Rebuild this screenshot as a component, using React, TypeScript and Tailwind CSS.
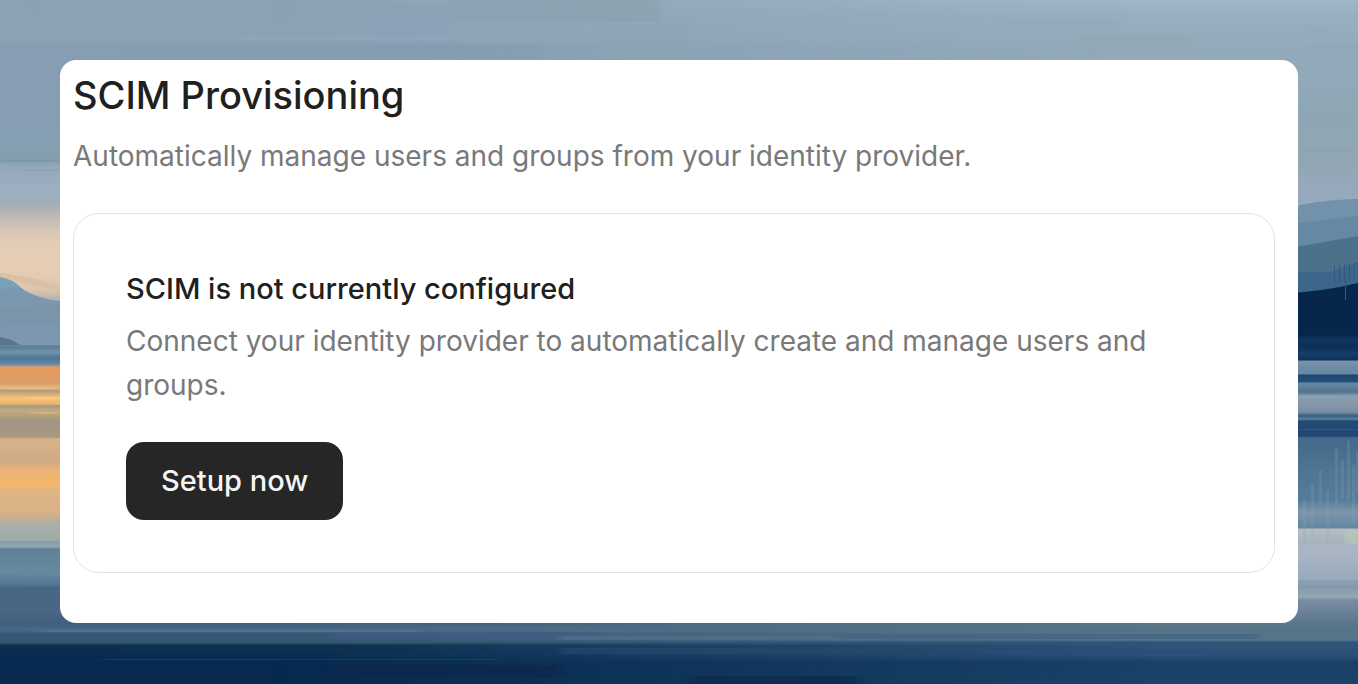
type Band = [y: number, color: string]

// Gradient stops down each side of the scene; a repeated y is a hard edge.
const LEFT: Band[] = [
  [0, '#8ba2b5'], [38, '#8ca3b4'], [46, '#879db2'], [120, '#869db5'], [148, '#87a1b0'], [158, '#819cab'],
  [168, '#96a9bb'], [190, '#9dafc0'], [204, '#a1adb7'], [216, '#beb9b5'], [232, '#d9c8b6'], [245, '#e4cdb5'],
  [270, '#e5ceb4'], [290, '#dcc5b0'], [300, '#b5b0ae'], [304, '#7c9ab3'], [322, '#7c96ae'], [340, '#7089a1'],
  [348, '#5d7f99'], [352, '#7194ae'], [358, '#54778f'], [364, '#5989b0'], [367, '#e09a62'], [372, '#e79c60'],
  [384, '#d79d68'], [387, '#e5ba7d'], [391, '#b29d7e'], [398, '#f6c277'], [404, '#edb36b'], [406, '#9e9a83'],
  [410, '#c5a982'], [416, '#b5a079'], [420, '#a19785'], [437, '#aa9780'], [439, '#d7b28a'], [462, '#cfab83'],
  [470, '#edb377'], [486, '#f4b668'], [490, '#dfb583'], [510, '#dbb287'], [518, '#c8ad8e'], [524, '#a9afa9'],
  [540, '#9eaaa5'], [542, '#859dad'], [547, '#91a5ad'], [549, '#5f7f97'], [572, '#67899f'], [584, '#547895'],
  [588, '#456583'], [612, '#4a6785'], [624, '#3f5f7d'], [630, '#4c6a84'], [634, '#365779'], [643, '#34566f'],
  [645, '#0d304f'], [660, '#062a50'], [684, '#07294b'],
]

const RIGHT: Band[] = [
  [0, '#a0b7c7'], [14, '#98afbf'], [50, '#93aaba'], [110, '#8ea7b5'], [165, '#91a6b3'], [182, '#96a8bb'],
  [210, '#97a9bb'], [320, '#05264b'], [334, '#03264c'], [340, '#12365d'], [346, '#0a2f58'], [354, '#153e69'],
  [360, '#0c3158'], [361, '#7892a9'], [374, '#6987a4'], [375, '#1c4670'], [382, '#24507a'], [383, '#6988a5'],
  [392, '#52738b'], [396, '#889eb1'], [404, '#8797a8'], [412, '#7890a5'], [416, '#345e81'], [419, '#5f809c'],
  [421, '#224b75'], [436, '#214773'], [438, '#43698c'], [470, '#4f7592'], [500, '#577c99'], [512, '#7c95aa'],
  [528, '#6486a0'], [529, '#b5bfc1'], [542, '#a7b3bd'], [548, '#abb6c5'], [562, '#a5b2c3'], [577, '#98aabd'],
  [586, '#8097ac'], [597, '#96a6b0'], [600, '#788da4'], [611, '#6c8299'], [628, '#557386'], [640, '#59748a'],
  [642, '#2e557b'], [656, '#2c5075'], [662, '#194168'], [684, '#1b4268'],
]

// Thin brush strokes: x, y, width, height, colour.
const STROKES: [number, number, number, number, string][] = [
  [30, 0, 260, 22, '#8aa2b0'], [96, 20, 70, 22, '#8ca4b7'], [370, 4, 80, 40, '#8ba2b8'],
  [450, 0, 210, 22, '#8aa2b0'], [240, 36, 330, 4, '#8ea7bb'], [125, 44, 420, 14, '#869cb2'],
  [600, 24, 90, 34, '#8da4b4'], [1000, 18, 120, 14, '#93aabc'], [1080, 34, 110, 22, '#92a8b6'],
  [960, 10, 80, 4, '#9ab2bf'], [1304, 26, 25, 10, '#94a9c1'], [1304, 46, 54, 1, '#87a2ae'],
  [0, 160, 60, 2, '#7797a8'], [20, 169, 40, 2, '#8ba4af'], [24, 303, 36, 2, '#91a9bb'],
  [0, 388, 60, 1, '#f6cd88'], [26, 397, 34, 2, '#ffcf85'], [30, 412, 30, 2, '#dfb67a'],
  [18, 575, 42, 2, '#68869c'], [30, 590, 30, 2, '#4c6b87'],
  [40, 630, 380, 2, '#587690'], [330, 632, 260, 6, '#3f5d86'], [560, 636, 320, 4, '#526f8c'],
  [120, 646, 280, 8, '#08304f'], [100, 659, 400, 1, '#1e426c'], [330, 665, 230, 12, '#08284c'],
  [560, 648, 350, 6, '#234c6a'], [690, 676, 170, 8, '#0b2c4e'], [840, 634, 420, 5, '#426580'],
  [980, 650, 230, 4, '#294e7c'], [1298, 396, 40, 2, '#91a7b4'], [1298, 429, 60, 1, '#34618d'],
  [1298, 578, 60, 1, '#a6b5c6'], [1298, 583, 60, 2, '#8da2b9'], [1298, 150, 60, 1, '#829fac'],
  [1346, 530, 12, 14, '#bdc9ba'],
]

const REEDS: [number, number, number][] = [
  [1303, 500, 42], [1311, 484, 52], [1319, 470, 34], [1326, 490, 52], [1335, 448, 58], [1341, 460, 38],
  [1347, 440, 60], [1352, 465, 58], [1356, 450, 42],
]

function Stops({ bands }: { bands: Band[] }) {
  return bands.map(([y, color], i) => <stop key={i} offset={y / 684} stopColor={color} />)
}

function LakeScene() {
  return (
    <svg
      className="absolute inset-0 h-full w-full"
      viewBox="0 0 1358 684"
      preserveAspectRatio="none"
      aria-hidden="true"
    >
      <defs>
        <linearGradient id="left" x1="0" y1="0" x2="0" y2="1">
          <Stops bands={LEFT} />
        </linearGradient>
        <linearGradient id="right" x1="0" y1="0" x2="0" y2="1">
          <Stops bands={RIGHT} />
        </linearGradient>
        <linearGradient id="fade" x1="0" y1="0" x2="1" y2="0">
          <stop offset="0.2" stopColor="#000" />
          <stop offset="0.85" stopColor="#fff" />
        </linearGradient>
        <mask id="blend">
          <rect width="1358" height="684" fill="url(#fade)" />
        </mask>
        <filter id="soft" x="-10%" y="-200%" width="120%" height="500%">
          <feGaussianBlur stdDeviation="4 0.5" />
        </filter>
      </defs>
      <rect width="1358" height="684" fill="url(#left)" />
      <rect width="1358" height="684" fill="url(#right)" mask="url(#blend)" />

      {STROKES.map(([x, y, w, h, color], i) => (
        <rect key={i} x={x} y={y} width={w} height={h} fill={color} opacity="0.7" filter="url(#soft)" />
      ))}

      {/* left hills */}
      <path d="M0 273Q30 276 60 286V292Q30 284 0 277Z" fill="#dcc0a6" />
      <path d="M0 277Q12 279 20 287Q34 298 60 301V345H0Z" fill="#7c98b0" />
      <path d="M0 277Q12 279 20 287Q10 286 0 290Z" fill="#7ba1b8" />
      <path d="M0 310Q30 304 60 304V325Q30 321 0 327Z" fill="#7a94a9" />
      <path d="M0 337Q10 338 20 345H0Z" fill="#587590" />

      {/* right hills */}
      <path d="M1290 208Q1315 200 1358 199V300H1290Z" fill="#7291aa" />
      <path d="M1290 224L1358 216V250H1290Z" fill="#6589a5" />
      <path d="M1290 248Q1325 242 1358 236V300H1290Z" fill="#4b718b" />
      <path d="M1290 272H1330L1358 262V300H1290Z" fill="#3c678b" />
      <path d="M1290 293Q1325 291 1358 283V335H1290Z" fill="#06264b" />
      {[1334, 1339, 1344, 1349, 1354].map((x, i) => (
        <rect key={x} x={x} y={266 - i} width="1" height={18} fill="#315a80" />
      ))}
      <rect x="1345" y="280" width="1" height="20" fill="#2f5a82" />

      {REEDS.map(([x, y, h]) => (
        <rect key={x} x={x} y={y} width="3" height={h} fill="#8fa5b6" opacity="0.22" />
      ))}
    </svg>
  )
}

export default function App() {
  return (
    <div className="relative min-h-screen overflow-hidden p-[60px] font-['Inter',sans-serif]">
      <LakeScene />
      <main className="relative rounded-2xl bg-white pt-[11px] pr-[23px] pb-[50px] pl-[13px]">
        <h1 className="text-[38px] leading-[48px] font-medium text-[#202020]">SCIM Provisioning</h1>
        <p className="mt-[15px] text-[28px] leading-[44px] text-[#797979]">
          Automatically manage users and groups from your identity provider.
        </p>

        <section className="mt-[35px] rounded-[26px] border border-[#e2e2e2] px-[52px] pt-[53px] pb-[52px]">
          <h2 className="text-[29px] leading-[44px] font-medium text-[#202020]">
            SCIM is not currently configured
          </h2>
          <p className="mt-2 text-[28px] leading-[44px] text-[#797979]">
            Connect your identity provider to automatically create and manage users and groups.
          </p>
          <button
            type="button"
            className="mt-[35px] h-[78px] cursor-pointer rounded-[18px] bg-[#262626] px-[35px] text-[29px] font-medium text-[#f5f5f5]"
          >
            Setup now
          </button>
        </section>
      </main>
    </div>
  )
}
